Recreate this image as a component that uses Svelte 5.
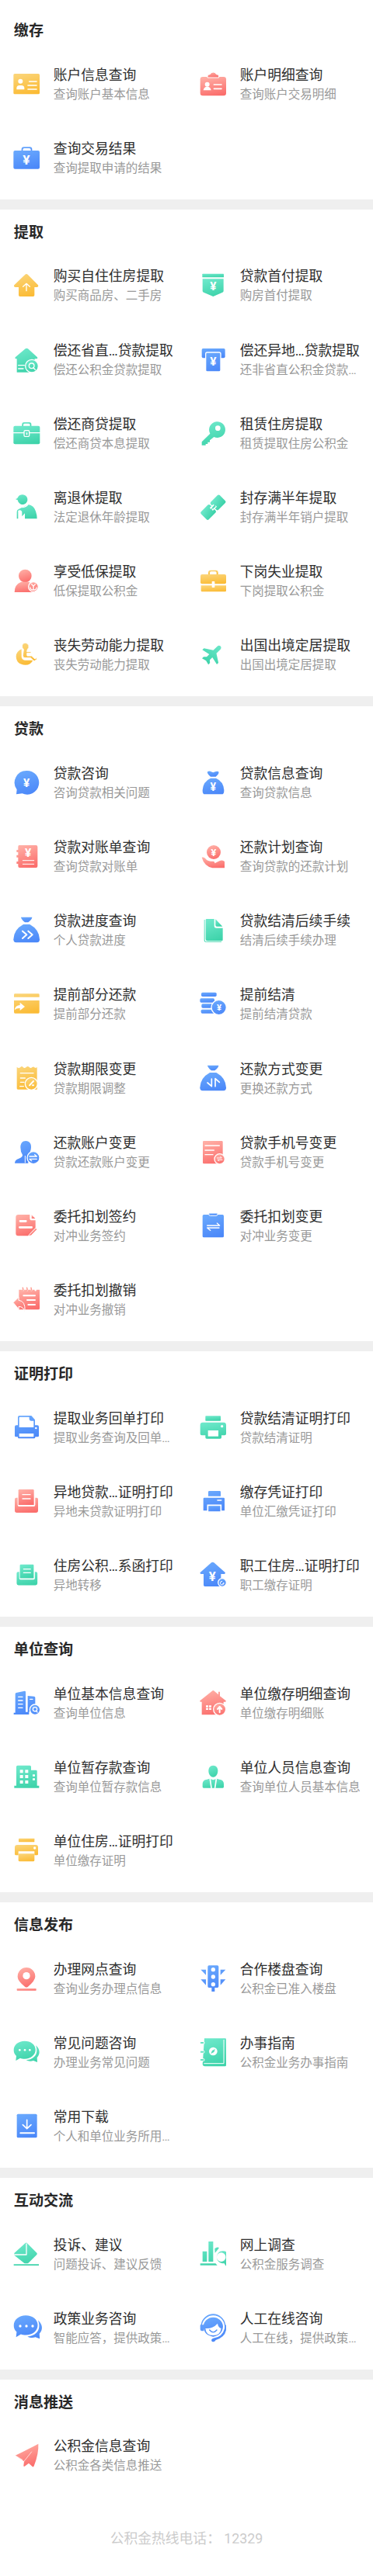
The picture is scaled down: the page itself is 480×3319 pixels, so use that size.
<script>
  const yen = (x, y, size = 46) =>
    `<text x="${x}" y="${y + size * 0.35}" font-size="${size}" font-weight="700" font-family="Roboto, sans-serif" text-anchor="middle" fill="#fff" stroke="none">¥</text>`;
  const line = (d, width = 5) =>
    `<path d="${d}" fill="none" stroke="#fff" stroke-width="${width}" stroke-linecap="round" stroke-linejoin="round"/>`;
  const badge = (x, y, r) => `<circle cx="${x}" cy="${y}" r="${r}" stroke="#fff" stroke-width="4"/>`;

  const sackBody = '<path d="M39 30h25q37 20 38 58 0 12-10 12H11Q1 100 1 88q1-38 38-58z"/><path d="M30 2h43q0 8-15 20H45Q30 9 30 2z"/>';
  const tray =
    '<path d="M24 6h52q4 0 4 4v56H20V10q0-4 4-4z"/><path d="M6 44q0-6 6-6h5v28q0 6 6 6h56q6 0 6-6V38h5q6 0 6 6v44q0 8-8 8H14q-8 0-8-8z"/>' +
    line('M36 26h30M36 42h30', 4);
  const bubbles = '<path d="M44 8c24 0 42 14 42 34S68 77 44 77c-7 0-12-1-17-3L10 84l2-18C5 60 2 52 2 43 2 23 20 8 44 8z"/><path d="M87 25c17 14 18 34 5 47l1 18-15-6c-9 3-19 3-28-2 23-1 52-18 37-57z"/>';

  // every icon is drawn on a 102 x 102 grid
  const icons = {
    idCard:
      '<rect x="1" y="12" width="101" height="79" rx="5"/><g fill="#fff"><circle cx="28" cy="41" r="9"/><path d="M13 73v-5q0-11 11-11h8q11 0 11 11v5z"/></g>' +
      line('M62 42h28M57 57h33M57 72h33'),
    badgeCard:
      '<rect x="2" y="24" width="100" height="73" rx="10"/><path d="M30 27v-6q0-7 10-7 3-8 12-8t12 8q10 0 10 7v6z" stroke="#fff" stroke-width="3"/><g fill="#fff"><circle cx="29" cy="53" r="9"/><path d="M14 76q1-10 11-14h8q10 4 11 14z"/></g>' +
      line('M55 54h29M55 70h29'),
    bagYen: '<path d="M32 26v-7q0-9 9-9h23q9 0 9 9v7h-5v-5q0-6-6-6H43q-6 0-6 6v5z"/><rect x="1" y="24" width="101" height="71" rx="6"/>' + yen(51, 60, 52),
    houseUp:
      '<path d="M46 11q5-4 10 0l40 41q3 7-5 8h-9v31q0 5-5 5H26q-5 0-5-5V60H9q-9-1-5-8z"/>' + line('M51 74V47M38 58l13-12 13 12', 4),
    ribbon: '<rect x="10" y="8" width="83" height="14" rx="2"/><path d="M11 28h81v46q0 4-4 6L52 96 15 80q-4-2-4-6z"/>' + yen(52, 57, 46),
    houseSearch:
      '<path d="M47 10q5-4 10 0l36 33q3 5-2 6h-8v52H14V49h-4q-5-1-2-6z"/>' + line('M20 74h23M20 87h19', 4) + badge(72, 77, 25) +
      '<circle cx="71" cy="76" r="10" fill="none" stroke="#fff" stroke-width="4"/>' + line('M78 84l7 7', 4),
    atm: '<path d="M13 9h80q5 0 5 5v26q0 6-6 6H14q-6 0-6-6V14q0-5 5-5z"/><rect x="23" y="24" width="58" height="75" rx="6" stroke="#fff" stroke-width="4"/>' + yen(52, 60, 46),
    briefcase:
      '<path d="M34 25v-8q0-8 8-8h20q8 0 8 8v8h-5v-6q0-5-5-5H44q-5 0-5 5v6z"/><rect x="1" y="23" width="102" height="71" rx="6"/>' + line('M1 50h102', 4) +
      '<rect x="42" y="41" width="20" height="23" rx="4" stroke="#fff" stroke-width="4"/><rect x="50" y="49" width="5" height="9" fill="#fff"/>',
    key: '<path d="M65 7a31 31 0 1 1-10 59L39 79v7h-8v7h-8v5H8V85l32-32A31 31 0 0 1 65 7z"/><circle cx="70" cy="32" r="10" fill="#fff"/>',
    elder:
      '<path d="M9 21q8-1 9-7Q24 4 36 4a19 19 0 1 1-17 27q-2-4-2-7-5 0-8-3z"/><path d="M58 42q22 4 29 26 5 15 5 29H45V76L34 88V73q0-8-9-9-8 0-6 8v25h-5V70q0-7 7-10z"/>' + line('M36 53q16-2 24-15', 4),
    link:
      '<g transform="translate(52 53) rotate(-45)"><rect x="-51" y="-21" width="49" height="42" rx="6"/><rect x="2" y="-21" width="49" height="42" rx="6"/><rect x="-11" y="-8" width="20" height="7" fill="#fff"/><rect x="-10" y="2" width="22" height="6" fill="#fff"/><rect x="-4" y="-3" width="14" height="7" /></g>',
    userYen:
      '<circle cx="46" cy="33" r="25"/><path d="M5 95q0-29 26-39h28q24 8 24 33v7H9q-4 0-4-1z"/><circle cx="78" cy="75" r="19" stroke="#fff" stroke-width="4"/>' +
      line('M71 65l7 8 7-8M78 73v11M66 78q0 9 12 9t12-9', 4),
    toolbox:
      '<path d="M33 28v-8q0-9 9-9h20q9 0 9 9v8h-6v-7q0-5-5-5H44q-5 0-5 5v7z"/><rect x="3" y="27" width="99" height="37" rx="6"/><path d="M5 70h97v20q0 4-4 4H9q-4 0-4-4z"/><rect x="47" y="54" width="11" height="24" rx="2" fill="#fff"/>',
    wheelchair:
      '<path d="M32 31v30q1 12 13 13h31q-8 18-29 18Q12 90 11 59q1-19 21-28z"/><path d="M47 7a14 14 0 0 1 8 25l-2 9h16v6H53l1 10h17l13 12 7-5 1 6-11 8-14-13H45q-8 0-8-9l3-24q-6-4-6-11A14 14 0 0 1 47 7z" stroke="#fff" stroke-width="3"/>',
    airplane:
      '<g transform="translate(50 50) rotate(45) scale(4) translate(-11.5 -12)"><path d="M21.4 16v-2l-7.8-5V3.5c0-1.3-1-2.2-2.1-2.2S9.4 2.200 9.400 3.500V9l-7.800 5v2.200l7.800-1.700V18l-2.200 2v2.200l4.300-1.200 4.300 1.200V20l-2.200-2v-3.500l7.800 1.700z"/></g>',
    chatYen: '<path d="M52 6a46 46 0 1 1-17 88l-23 3 2-18A46 46 0 0 1 52 6z"/>' + yen(51, 52, 46),
    sackYen:
      '<path d="M30 10q8-5 14 0 8 5 16 0 8-4 13 0 3 8-11 19H42Q27 17 30 10z"/><path d="M42 35h21q30 13 31 48 0 14-9 14H20q-9 0-9-14 1-35 31-48z"/>' + yen(52, 70, 42),
    ledger: '<path d="M23 9h65q6 0 6 6v75q0 6-6 6H25q-6 0-6-6v-9h-6v-9h6V56h-6v-9h6V36h-6v-9h6V15q0-6 4-6z"/>' + yen(57, 37, 46) + line('M37 68h43M37 82h43', 3),
    handCoin: '<circle cx="54" cy="36" r="27"/><path d="M8 56q8-3 14 5 8 10 20 10h9q8 1 7 8l18-9q12-6 20 2v25H49Q17 89 8 56z"/>' + yen(54, 37, 38),
    sackNext: sackBody + line('M36 56l16 14-16 14M58 56l16 14-16 14', 6),
    fileGreen:
      '<path d="M20 12v77q0 8 7 8h57v2H25q-8 0-8-8V12z"/><path d="M27 9h29v26q0 9 8 9h25v46q0 4-5 4H30q-7 0-7-7V13q0-4 4-4z"/><path d="M61 10l27 28H66q-5 0-5-5z"/>',
    cardArrow:
      '<path d="M7 13h90q4 0 4 4v9H3v-9q0-4 4-4zM3 39h98v45q0 5-4 5H7q-4 0-4-5z"/><path d="M5 76q4-19 21-19V47l19 16-19 15v-9Q13 68 5 76z" fill="#fff"/>',
    coins:
      '<rect x="6" y="8" width="59" height="16" rx="5"/><rect x="1" y="31" width="56" height="16" rx="5"/><rect x="7" y="52" width="54" height="16" rx="5"/><rect x="5" y="74" width="54" height="15" rx="5"/>' + badge(74, 66, 29) + yen(75, 67, 34),
    receiptEdit:
      '<path d="M14 8q7 8 14 1 5-6 10 0 5 6 12 0 6-6 12 0 6 6 11 0 6-4 9 1 5 4 10-2v87H18q-4 0-4-4z"/>' + line('M28 32h50M28 51h18M28 67h14M26 83h14', 4) + badge(70, 73, 24) + line('M63 79l15-16M75 79h3', 6),
    sackSwap: sackBody + line('M46 54v29L30 69M60 83V53l16 14'),
    userSwap:
      '<path d="M49 9c14 0 21 11 20 25 0 12-6 20-9 29l-2 32H6q0-13 16-18 14-5 14-14-8-12-8-29C28 19 35 9 49 9z"/><path d="M46 66v28" stroke="#fff" stroke-width="3"/>' +
      badge(78, 74, 24) + line('M63 69h28l-8-7M91 79H63l8 7', 4),
    docSwap: '<rect x="12" y="9" width="77" height="88" rx="4"/>' + line('M21 27h55M21 45h34M21 62h30', 4) + badge(77, 79, 20) + line('M67 75h18l-5-5M87 82H69l5 5', 3),
    docPen:
      '<path d="M20 9h44v14q0 8 8 8h14v30L60 91H19q-9 0-9-9V19q0-10 10-10z"/><path d="M71 10l14 14H71z"/>' + line('M27 34h22M25 58h46', 8) +
      '<path d="M62 86l24-25q7-1 6 6L70 89l-12 4z" stroke="#fff" stroke-width="3"/>',
    clipSwap: '<rect x="11" y="9" width="82" height="88" rx="5"/><path d="M35 3h34v4q0 6-6 6H41q-6 0-6-6z" stroke="#fff" stroke-width="3"/>' + line('M29 51h48L67 42M75 60H29l12 10', 4),
    notepadUndo:
      '<path d="M22 14h80v72q0 5-5 5H22z"/>' + line('M38 2v14M54 2v14M70 2v14M86 2v14', 7) + '<path d="M36 5q5 10 0 14M52 5q5 10 0 14M68 5q5 10 0 14" fill="none" stroke="#ff9c92" stroke-width="4"/>' +
      line('M40 37h44M54 54h30M58 72h26', 6) + '<path d="M0 64l21-21v12q27 2 24 43-6-19-24-19v10z" stroke="#fff" stroke-width="3"/>',
    printerFold:
      '<path d="M24 6h46l14 16v21h9q6 0 6 6v35q0 4-5 4h-9v2q0 4-5 4H22q-4 0-4-4v-2h-7q-5 0-5-4V49q0-6 6-6h6V12q0-6 6-6z"/><path d="M23 15q0-4 4-4h35v8q0 7 7 7h10v25H23zM23 75h56v13H23z" fill="#fff"/><circle cx="88" cy="54" r="4" fill="#fff"/>',
    printerGreen:
      '<rect x="22" y="7" width="59" height="19" rx="2"/><path d="M12 32h80q10 0 10 10v34q0 6-6 6H84v8q0 5-5 5H27q-5 0-5-5v-8H8q-6 0-6-6V42q0-10 10-10z"/><path d="M32 63h40v23H32z" fill="#fff"/><circle cx="86" cy="47" r="5" fill="#fff"/>',
    tray,
    printerBlue:
      '<path d="M37 12h40q4 0 4 4v16H33V16q0-4 4-4zM18 38h74q4 0 4 4v46H14V42q0-4 4-4z"/><path d="M31 67h51v26H31z" stroke="#fff" stroke-width="5"/>' + line('M69 48h14', 5),
    trayGreen: `<g transform="translate(8 6) scale(.89)">${tray}</g>`,
    houseYen: '<path d="M45 4q5-4 10 0l43 38q2 5-3 6H82v43q0 5-5 5H20q-5 0-5-5V48H5q-5-1-3-6z"/>' + yen(49, 56, 50) + badge(87, 81, 16) + line('M86 76a7 7 0 1 0 7 5l-5 6', 3),
    towerSearch:
      '<path d="M8 17q0-4 4-5l32-7q4 0 4 4v77h8V24l24 2q5 0 5 5v28L61 86v10H2v-7h6z"/>' + line('M20 28h16M20 42h16M20 56h16M20 70h16M65 37h10', 4) + badge(84, 77, 20) +
      '<circle cx="84" cy="76" r="8" fill="none" stroke="#fff" stroke-width="4"/>' + line('M88 82l5 5', 4),
    houseBadge:
      '<path d="M48 5q4-4 8 0l16 14V8h6v17l23 18q2 3-2 4h-7v50H8V47H3q-4-1-2-4z"/><path d="M24 61h9v7h-9zM36 61h9v7h-9zM24 71h9v7h-9zM36 71h9v7h-9z" fill="#fff"/>' + badge(77, 76, 24) + line('M77 88V68M69 75l8-9 8 9', 6),
    building:
      '<path d="M17 8h47q5 0 5 5v13h19q4 0 4 4v56h8v9H4v-9h8V13q0-5 5-5z"/><path d="M26 25h12v12H26zM46 25h12v12H46zM26 45h12v12H26zM46 45h12v12H46zM26 66h12v12H26zM46 66h12v12H46zM75 43h9v7h-9zM75 58h9v7h-9z" fill="#fff"/>',
    person: '<path d="M52 8c12 0 18 9 18 21 0 13-8 24-18 24S34 42 34 29C34 17 40 8 52 8z"/><path d="M11 91V79q0-15 17-17l10-3 14 5 14-5 10 3q17 2 17 17v12q0 4-4 4H15q-4 0-4-4z"/>' + line('M40 61l5 33M64 61l-5 33', 5),
    printerYellow: '<rect x="21" y="5" width="61" height="14" rx="2"/><path d="M16 30h71q9 0 9 9v27q0 4-4 4H82V55H20v15h-9q-5 0-5-4V40q0-10 10-10z"/><path d="M20 64h62v25q0 5-5 5H25q-5 0-5-5z"/><circle cx="83" cy="42" r="5" fill="#fff"/>',
    pin: '<path d="M51 9a34 34 0 0 1 34 35q0 15-28 39-6 5-12 0Q16 60 17 44A34 34 0 0 1 51 9z"/><rect x="14" y="90" width="75" height="8" rx="2"/><circle cx="51" cy="41" r="14" fill="#fff"/>',
    traffic:
      '<path d="M36 1h32q5 0 5 5v76q0 5-5 5H58v15H46V87H36q-5 0-5-5V6q0-5 5-5zM4 17h20v21zM4 55h20v22zM100 17H80v21zM100 55H80v22z"/><g fill="#fff"><circle cx="52" cy="17" r="8"/><circle cx="52" cy="45" r="8"/><circle cx="52" cy="74" r="8"/></g>',
    chats: bubbles + '<g fill="#fff"><circle cx="25" cy="43" r="4"/><circle cx="45" cy="43" r="4"/><circle cx="64" cy="43" r="4"/></g>',
    guide:
      '<path d="M18-2h80q4 0 4 4v100q0 4-4 4H20q-7 0-9-7z"/><path d="M93 3v92H16" fill="none" stroke="#fff" stroke-width="3"/><g fill="none" stroke="#fff" stroke-width="3"><rect x="3" y="10" width="15" height="10" rx="5"/><rect x="3" y="45" width="15" height="10" rx="5"/><rect x="3" y="76" width="15" height="10" rx="5"/></g><path d="M3 15h12M3 50h12M3 81h12" fill="none" stroke="#6be3c3" stroke-width="6"/><circle cx="52" cy="48" r="16" fill="#fff"/><path d="M60 39l-5 12-12 6 5-12z"/>',
    download: '<rect x="14" y="5" width="78" height="92" rx="5"/>' + line('M53 28v33M37 47l16 15 16-15', 5) + line('M28 79h53', 6),
    mailBox: '<path d="M54 10l37 37q3 3 0 7L60 85q-2 3-6 3h-8q-4 0-6-3L4 56V48L47 9q4-3 7 1zM2 91h97v5H2z"/>' + line('M51 12v42H5', 4),
    chart:
      '<path d="M11 41h17v40H11zM34 3h18v78H34zM2 88h59l7 7H2zM58 30q16-8 16-1L59 47z"/><path d="M102 43v55l-8-11a24 24 0 1 1 8-44zm-19 3a17 17 0 1 0 0 35 17 17 0 0 0 0-35z" fill-rule="evenodd"/>',
    chatDots: `<g transform="translate(0 -5) scale(1.1)">${bubbles}</g>` + '<g fill="#fff"><circle cx="27" cy="45" r="5"/><circle cx="51" cy="45" r="5"/><circle cx="75" cy="45" r="5"/></g>',
    headset:
      '<path d="M52-2a48 48 0 0 1 47 40l3 5v18q-6 28-40 38-6 10-15 5-5-9 5-12 36-4 44-38A44 44 0 0 0 52 4 44 44 0 0 0 9 40h7v24H8Q2 64 2 55V42l3-4A48 48 0 0 1 52-2z"/><path d="M52 11a38 38 0 0 1 38 35q-2 34-38 40-36-5-38-40a38 38 0 0 1 38-35z"/><path d="M22 54q28 2 47-19 2 15 14 19-3 27-31 27T22 54z" fill="#fff"/><path d="M38 60q14 17 28 0" fill="none" stroke="#4d8ef8" stroke-width="4" stroke-linecap="round"/>',
    send: '<path d="M97 8q2 38-17 86-2 5-6 2l-14-13-16 12q-4 2-4-3l2-16L8 53q70-34 89-45z"/>' + line('M40 78l31-39M36 70L9 54', 2),
  };

  const sections = [
    {
      title: '缴存',
      items: [
        ['idCard', 'yellow', '账户信息查询', '查询账户基本信息'],
        ['badgeCard', 'red', '账户明细查询', '查询账户交易明细'],
        ['bagYen', 'blue', '查询交易结果', '查询提取申请的结果'],
      ],
    },
    {
      title: '提取',
      items: [
        ['houseUp', 'yellow', '购买自住住房提取', '购买商品房、二手房'],
        ['ribbon', 'green', '贷款首付提取', '购房首付提取'],
        ['houseSearch', 'green', '偿还省直…贷款提取', '偿还公积金贷款提取'],
        ['atm', 'blue', '偿还异地…贷款提取', '还非省直公积金贷款…'],
        ['briefcase', 'green', '偿还商贷提取', '偿还商贷本息提取'],
        ['key', 'green', '租赁住房提取', '租赁提取住房公积金'],
        ['elder', 'green', '离退休提取', '法定退休年龄提取'],
        ['link', 'green', '封存满半年提取', '封存满半年销户提取'],
        ['userYen', 'red', '享受低保提取', '低保提取公积金'],
        ['toolbox', 'yellow', '下岗失业提取', '下岗提取公积金'],
        ['wheelchair', 'yellow', '丧失劳动能力提取', '丧失劳动能力提取'],
        ['airplane', 'green', '出国出境定居提取', '出国出境定居提取'],
      ],
    },
    {
      title: '贷款',
      items: [
        ['chatYen', 'blue', '贷款咨询', '咨询贷款相关问题'],
        ['sackYen', 'blue', '贷款信息查询', '查询贷款信息'],
        ['ledger', 'red', '贷款对账单查询', '查询贷款对账单'],
        ['handCoin', 'red', '还款计划查询', '查询贷款的还款计划'],
        ['sackNext', 'blue', '贷款进度查询', '个人贷款进度'],
        ['fileGreen', 'green', '贷款结清后续手续', '结清后续手续办理'],
        ['cardArrow', 'yellow', '提前部分还款', '提前部分还款'],
        ['coins', 'blue', '提前结清', '提前结清贷款'],
        ['receiptEdit', 'yellow', '贷款期限变更', '贷款期限调整'],
        ['sackSwap', 'blue', '还款方式变更', '更换还款方式'],
        ['userSwap', 'blue', '还款账户变更', '贷款还款账户变更'],
        ['docSwap', 'red', '贷款手机号变更', '贷款手机号变更'],
        ['docPen', 'red', '委托扣划签约', '对冲业务签约'],
        ['clipSwap', 'blue', '委托扣划变更', '对冲业务变更'],
        ['notepadUndo', 'red', '委托扣划撤销', '对冲业务撤销'],
      ],
    },
    {
      title: '证明打印',
      items: [
        ['printerFold', 'blue', '提取业务回单打印', '提取业务查询及回单…'],
        ['printerGreen', 'green', '贷款结清证明打印', '贷款结清证明'],
        ['tray', 'red', '异地贷款…证明打印', '异地未贷款证明打印'],
        ['printerBlue', 'blue', '缴存凭证打印', '单位汇缴凭证打印'],
        ['trayGreen', 'green', '住房公积…系函打印', '异地转移'],
        ['houseYen', 'blue', '职工住房…证明打印', '职工缴存证明'],
      ],
    },
    {
      title: '单位查询',
      items: [
        ['towerSearch', 'blue', '单位基本信息查询', '查询单位信息'],
        ['houseBadge', 'red', '单位缴存明细查询', '单位缴存明细账'],
        ['building', 'green', '单位暂存款查询', '查询单位暂存款信息'],
        ['person', 'green', '单位人员信息查询', '查询单位人员基本信息'],
        ['printerYellow', 'yellow', '单位住房…证明打印', '单位缴存证明'],
      ],
    },
    {
      title: '信息发布',
      items: [
        ['pin', 'red', '办理网点查询', '查询业务办理点信息'],
        ['traffic', 'blue', '合作楼盘查询', '公积金已准入楼盘'],
        ['chats', 'green', '常见问题咨询', '办理业务常见问题'],
        ['guide', 'green', '办事指南', '公积金业务办事指南'],
        ['download', 'blue', '常用下载', '个人和单位业务所用…'],
      ],
    },
    {
      title: '互动交流',
      items: [
        ['mailBox', 'green', '投诉、建议', '问题投诉、建议反馈'],
        ['chart', 'green', '网上调查', '公积金服务调查'],
        ['chatDots', 'blue', '政策业务咨询', '智能应答，提供政策…'],
        ['headset', 'blue', '人工在线咨询', '人工在线，提供政策…'],
      ],
    },
    {
      title: '消息推送',
      items: [['send', 'red', '公积金信息查询', '公积金各类信息推送']],
    },
  ];

  const gradients = [
    ['yellow', '#fbd477', '#fbbb35'],
    ['red', '#ffaea5', '#fb6e6c'],
    ['blue', '#69a8fd', '#4b88f9'],
    ['green', '#6de8ca', '#3ed3aa'],
  ];
</script>

<svg class="defs" aria-hidden="true">
  <defs>
    {#each gradients as [id, from, to]}
      <linearGradient {id} x1="0.3" y1="0" x2="0.6" y2="1">
        <stop offset="0" stop-color={from} />
        <stop offset="1" stop-color={to} />
      </linearGradient>
    {/each}
  </defs>
</svg>

<main class="page">
  {#each sections as section}
    <section class="section">
      <h2 class="heading">{section.title}</h2>
      <div class="grid">
        {#each section.items as [icon, color, title, desc]}
          <div class="item">
            <svg class="icon {color}" viewBox="0 0 102 102" aria-hidden="true">{@html icons[icon]}</svg>
            <div class="info">
              <div class="title">{title}</div>
              <div class="desc">{desc}</div>
            </div>
          </div>
        {/each}
      </div>
    </section>
  {/each}
  <footer class="hotline">公积金热线电话： 12329</footer>
</main>

<style>
  :global(body) {
    margin: 0;
    background: #fff;
  }

  .defs {
    position: absolute;
    width: 0;
    height: 0;
  }

  .page {
    box-sizing: border-box;
    width: 480px;
    height: 3319px;
    padding-top: 10px;
    overflow: hidden;
    background: #fff;
    font-family: Roboto, 'Noto Sans CJK SC', sans-serif;
  }

  /* a border would be rounded down to 12px */
  .section + .section::before {
    content: '';
    display: block;
    height: 12.8px;
    background: #efefef;
  }

  .heading {
    box-sizing: border-box;
    height: 56.6px;
    margin: 0;
    padding: 16px 0 0 17.8px;
    font-size: 19.1px;
    font-weight: 700;
    line-height: 28px;
    color: #282828;
  }

  .grid {
    display: grid;
    grid-template-columns: 240px 240px;
    grid-auto-rows: 95.2px;
  }

  .item {
    display: flex;
    align-items: flex-start;
    padding: 16px 0 0 17.4px;
  }

  .icon {
    flex: none;
    width: 34px;
    height: 34px;
    margin: 8px 17.3px 0 0;
    overflow: visible;
  }

  .yellow {
    fill: url(#yellow);
  }

  .red {
    fill: url(#red);
  }

  .blue {
    fill: url(#blue);
  }

  .green {
    fill: url(#green);
  }

  .info {
    white-space: nowrap;
  }

  .title {
    font-size: 17.8px;
    line-height: 27px;
    color: #2e2e2e;
  }

  .desc {
    font-size: 15.5px;
    line-height: 25px;
    color: #999;
  }

  .hotline {
    padding-top: 39px;
    font-size: 17.8px;
    line-height: 28px;
    text-align: center;
    color: #ccc;
  }
</style>
